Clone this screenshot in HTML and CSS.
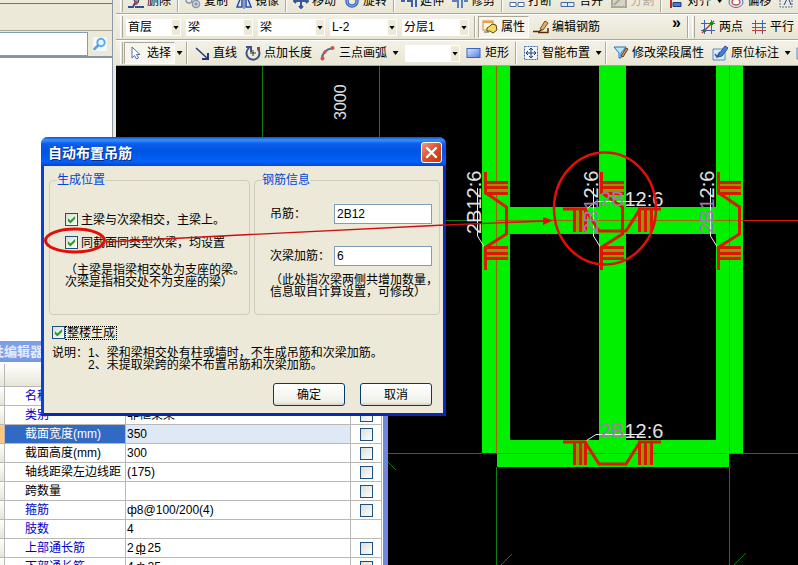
FILE: index.html
```html
<!DOCTYPE html>
<html lang="zh-CN">
<head>
<meta charset="utf-8">
<title>自动布置吊筋</title>
<link rel="stylesheet" href="styles.css">
</head>
<body>
<div class="app">
  <aside class="side">
    <div class="side-top"></div>
    <div class="side-bar"></div>
    <form class="search">
      <input type="text" class="search-box" aria-label="搜索">
      <button type="button" class="search-btn" aria-label="查找">
        <svg width="14" height="14" viewBox="0 0 14 14"><rect width="14" height="14" fill="#f2f8fc"/><circle cx="8" cy="5.500" r="3.700" fill="#eaf6ff" stroke="#62a9e8" stroke-width="2"/><path d="M5 8.500L1.500 12" stroke="#5a9fe0" stroke-width="2.500" stroke-linecap="round"/></svg>
      </button>
    </form>
  </aside>

  <main class="work">
    <div class="bars">
      <div class="bar">
        <i class="grip"></i>
        <button class="tool"><svg class="ic" viewBox="0 0 16 16"><path d="M10 0L6 8l4 2 3-10z" fill="#8a9ac8" stroke="#334" /><circle cx="8" cy="10" r="2" fill="#d04040"/><path d="M0 14h5l2-4M7 14h9" stroke="#345090" stroke-width="2" fill="none"/></svg>删除</button>
        <i class="sep"></i>
        <button class="tool"><svg class="ic" viewBox="0 0 16 16"><g fill="none" stroke="#8794b0" stroke-width="1.500"><circle cx="4" cy="7" r="3"/><circle cx="11" cy="11" r="3.500"/><circle cx="11" cy="11" r="1"/></g></svg>复制</button>
        <button class="tool"><svg class="ic" viewBox="0 0 16 16"><path d="M6 1v13H1zM10 1v13h5z" fill="#dfe8ff" stroke="#2c4ea0" stroke-width="1.500"/><path d="M8 0v16" stroke="#2c4ea0"/></svg>镜像</button>
        <i class="sep"></i>
        <button class="tool"><svg class="ic" viewBox="0 0 16 16"><path d="M8 1v14M1 8h14M6 13l2 2 2-2M3 6L1 8l2 2M13 6l2 2-2 2M6 3l2-2 2 2" fill="none" stroke="#3a569a" stroke-width="2"/></svg>移动</button>
        <button class="tool"><svg class="ic" viewBox="0 0 16 16"><circle cx="8" cy="8" r="5" fill="none" stroke="#3a62c0" stroke-width="3.500"/><circle cx="8" cy="8" r="5" fill="none" stroke="#9cbcf0"/></svg>旋转</button>
        <i class="sep"></i>
        <button class="tool"><svg class="ic" viewBox="0 0 16 16"><path d="M0 8h4M6 8h4M11 1v13M15 1v13" stroke="#3a62a8" stroke-width="2"/></svg>延伸</button>
        <button class="tool"><svg class="ic" viewBox="0 0 16 16"><path d="M6 1v14M10 1v14M0 8h5M12 8h4" stroke="#5a80b8" stroke-width="2"/></svg>修剪</button>
        <i class="sep"></i>
        <button class="tool"><svg class="ic" viewBox="0 0 16 16"><path d="M1 9.500h6v4H1zM9 9.500h6v4H9z" fill="#fff" stroke="#4a68a0"/></svg>打断</button>
        <button class="tool"><svg class="ic" viewBox="0 0 16 16"><path d="M1 9.500h13v4H1zM7.500 9v4" fill="#dde8ff" stroke="#4a68a0"/></svg>合并</button>
        <button class="tool" disabled><svg class="ic" viewBox="0 0 16 16"><path d="M1 5h14v9H1zM3 12l8-8" fill="#d8d4c4" stroke="#aaa89a" stroke-width="2"/></svg>分割</button>
        <i class="sep"></i>
        <button class="tool"><svg class="ic" viewBox="0 0 16 16"><path d="M3 0v15" stroke="#c02020" stroke-width="2"/><path d="M5 9.500h8v4H5zM5 3.500h5v3H5z" fill="#4a78d8" stroke="#203c80"/></svg>对齐</button>
        <button class="drop" aria-label="对齐选项"></button>
        <button class="tool"><svg class="ic" viewBox="0 0 16 16"><ellipse cx="8" cy="9" rx="7" ry="5.500" fill="#e8eef8" stroke="#5070a8"/><ellipse cx="8" cy="9" rx="4" ry="3" fill="#fff" stroke="#d05050" stroke-width="1.500"/></svg>偏移</button>
        <button class="tool"><svg class="ic" viewBox="0 0 16 16"><path d="M1 1h12v13H1z" fill="none" stroke="#5070b0" stroke-dasharray="2 1"/><path d="M5 12l4-8 3 8" fill="none" stroke="#204080"/></svg>拉伸</button>
      </div>

      <div class="bar">
        <i class="grip"></i>
        <span class="combos">
          <span class="combo combo-s"><select aria-label="楼层"><option>首层</option></select></span>
          <span class="combo"><select aria-label="构件类别"><option>梁</option></select></span>
          <span class="combo"><select aria-label="构件类型"><option>梁</option></select></span>
          <span class="combo"><select aria-label="构件名称"><option>L-2</option></select></span>
          <span class="combo"><select aria-label="分层"><option>分层1</option></select></span>
        </span>
        <i class="sep"></i>
        <button class="tool pressed"><svg class="ic" viewBox="0 0 16 16"><rect x="1" y="2" width="10" height="9" fill="#fffbe8" stroke="#c88a30"/><path d="M1 2h10v2H1z" fill="#f0a040"/><path d="M5 9l3-2 2-2 4 1 1 5-4 3-3-2H5z" fill="#f2dc60" stroke="#5a4a10"/><path d="M2 13h5" stroke="#555"/></svg>属性</button>
        <button class="tool"><svg class="ic" viewBox="0 0 16 16"><path d="M0 12.500h6l3-2M5 13.500h10V9" fill="none" stroke="#5a2a10" stroke-width="1.500"/><path d="M7 10l5-8 3 2-5 7z" fill="#e8b060" stroke="#705020"/></svg>编辑钢筋</button>
        <button class="more" aria-label="更多">»</button>
        <i class="sep"></i>
        <i class="grip"></i>
        <button class="tool"><svg class="ic" viewBox="0 0 16 16"><path d="M1 4.500h14M1 11.500h14M4.500 1v14M11.500 1v14" stroke="#4060b0"/><path d="M2 14L14 2" stroke="#c03030" stroke-width="1.500"/><path d="M3 10h3v3H3zM10 3h3v3h-3z" fill="#208030"/></svg>两点</button>
        <button class="tool"><svg class="ic" viewBox="0 0 16 16"><path d="M4.500 1v14M11.500 1v14" stroke="#4060b0"/><path d="M1 4.500h14" stroke="#4060b0"/><path d="M1 8.500h14M1 11.500h14" stroke="#c04040"/></svg>平行</button>
      </div>

      <div class="bar">
        <i class="grip"></i>
        <button class="tool pressed"><svg class="ic" viewBox="0 0 16 16"><path d="M4 2v11l2.500-2.500L8.500 14l2-1-2-3.500H12z" fill="#fff" stroke="#4a70b0"/></svg>选择</button>
        <button class="drop" aria-label="选择选项"></button>
        <i class="sep"></i>
        <button class="tool"><svg class="ic" viewBox="0 0 16 16"><path d="M2 3l11 10" stroke="#203c78" stroke-width="1.500"/><path d="M14 8v6H8" fill="none" stroke="#203c78" stroke-width="2"/></svg>直线</button>
        <button class="tool"><svg class="ic" viewBox="0 0 16 16"><path d="M4 3a6.500 6.500 0 1 0 9 1" fill="none" stroke="#3c5488" stroke-width="2"/><path d="M1 2h5v5" fill="none" stroke="#3c5488" stroke-width="2"/><path d="M8 5v6M5 8h6" stroke="#333"/><path d="M12 2h3v3h-3z" fill="#b04040"/></svg>点加长度</button>
        <button class="tool"><svg class="ic" viewBox="0 0 16 16"><path d="M2 14Q2 5 13 3" fill="none" stroke="#4a70a8" stroke-width="2"/><g fill="#d85040"><circle cx="2.500" cy="13.500" r="2"/><circle cx="5" cy="7" r="1.700"/><circle cx="12.500" cy="3" r="2"/></g></svg>三点画弧</button>
        <button class="drop" aria-label="画弧选项"></button>
        <span class="combo combo-s"><select aria-label="半径"><option></option></select></span>
        <button class="tool"><svg class="ic" viewBox="0 0 16 16"><defs><linearGradient id="box" x2="1" y2="1"><stop stop-color="#dce8ff"/><stop offset="1" stop-color="#4c80e0"/></linearGradient></defs><rect x="1" y="3.500" width="13" height="9" fill="url(#box)" stroke="#3a66c0"/></svg>矩形</button>
        <i class="sep"></i>
        <button class="tool"><svg class="ic" viewBox="0 0 16 16"><rect x="1.500" y="1.500" width="13" height="13" fill="#f0f6ff" stroke="#3c64b0" stroke-dasharray="2 1"/><path d="M8 3v10M3 8h10M6 5l2-2 2 2M6 11l2 2 2-2M5 6L3 8l2 2M11 6l2 2-2 2" fill="none" stroke="#223c70"/></svg>智能布置</button>
        <button class="drop" aria-label="布置选项"></button>
        <i class="sep"></i>
        <button class="tool"><svg class="ic" viewBox="0 0 16 16"><path d="M1 2h12L8 8v5H6V8z" fill="#b8e4ff" stroke="#2870c0"/><path d="M8 11l5-8 2 1-5 8z" fill="#d89050" stroke="#604020"/></svg>修改梁段属性</button>
        <button class="tool"><svg class="ic" viewBox="0 0 16 16"><path d="M1 4h12v11H1z" fill="#dceaff" stroke="#5a88c8"/><path d="M3 9l2 3 3-5" fill="none" stroke="#3060a0" stroke-width="1.500"/><path d="M7 9l6-8 3 2-6 8-4 1z" fill="#4a80d8" stroke="#2a4c90"/></svg>原位标注</button>
        <button class="drop" aria-label="标注选项"></button>
        <button class="tool" aria-label="重提梁跨"><svg class="ic" viewBox="0 0 16 16"><path d="M1 3h12v11H1z" fill="#dceaff" stroke="#5a88c8"/></svg></button>
      </div>
    </div>

    <div class="canvas">
      <svg width="682" height="499" viewBox="116 66 682 499" font-family="Liberation Sans, sans-serif">
        <defs>
          <g id="hanger" fill="none" stroke="#dc1800" stroke-width="3">
            <path d="M574 212h12v20h-12zM640 212h12v20h-12z" fill="#8c9a00" stroke="none"/>
            <path d="M563 209h24M574.500 209v23M580.500 209v23M585.500 209v23"/>
            <path d="M585 209l14 22h27l14-22"/>
            <path d="M638 209h23M639.500 209v23M645.500 209v23M651.500 209v23"/>
          </g>
          <g id="hangerV" fill="none" stroke="#dc1800" stroke-width="3">
            <path d="M487 182h21v11h-21zM487 247h21v11h-21z" fill="#8c9a00" stroke="none"/>
            <path d="M485.500 172v22M485 182.500h23M485 187.500h23M485 193.500h23"/>
            <path d="M486 193l20.500 14v27L486 247"/>
            <path d="M485.500 246v24M485 247.500h23M485 253.500h23M485 258.500h23"/>
          </g>
        </defs>
        <g stroke="#0c7c14">
          <path d="M262.500 66v100M379.500 66v100M440 220.500h42M388 453.500h94M496.500 467v98M729.500 467v98"/>
          <path d="M388 462l8 8M501 565l11-11M734 565l12-12"/>
        </g>
        <path d="M482 66h28v141h89V66h27v141h90V66h27v387h-14v14H497v-14h-15zM510 234v206h89V234zM626 234v206h90V234z" fill="#00f000" fill-rule="evenodd"/>
        <g stroke="#a86008">
          <path d="M496.500 66v387M729.500 66v387M496 220.500h247M496 453.500h247"/>
        </g>
        <path d="M743 220.500h55M743 453.500h55" stroke="#d81414"/>
        <g stroke="#f0f0f0" fill="none">
          <path d="M477.500 188v48l8 13M593.500 188v48l8 13M710.500 188v48l8 13"/>
          <path d="M645 201.500h-49l-9 7M645 434.500h-49l-11 7"/>
        </g>
        <use href="#hangerV"/>
        <use href="#hangerV" x="116"/>
        <use href="#hangerV" x="233"/>
        <use href="#hanger"/>
        <use href="#hanger" y="233"/>
        <g font-size="20" fill="#e0e0e0">
          <text transform="translate(481 234) rotate(-90)">2B12:6</text>
          <text transform="translate(598 234) rotate(-90)"><tspan class="over">2B1</tspan>2:6</text>
          <text transform="translate(714 234) rotate(-90)"><tspan class="over">2B1</tspan>2:6</text>
          <text x="600" y="206"><tspan class="over">2B</tspan>12:6</text>
          <text x="600" y="438"><tspan class="over">2B</tspan>12:6</text>
          <text font-size="16" transform="translate(346 120) rotate(-90)">3000</text>
        </g>
      </svg>
    </div>
  </main>

  <section class="panel">
    <h2 class="panel-title">属性编辑器</h2>
    <table class="props">
      <colgroup><col class="c-mark"><col class="c-name"><col class="c-value"><col class="c-check"></colgroup>
      <thead><tr><th></th><th></th><th></th><th></th></tr></thead>
      <tbody>
        <tr><th></th><td class="key">名称</td><td>L-2</td><td></td></tr>
        <tr><th></th><td class="key">类别</td><td>非框架梁</td><td><input type="checkbox" aria-label="类别"></td></tr>
        <tr class="selected"><th></th><td>截面宽度(mm)</td><td>350</td><td><input type="checkbox" aria-label="截面宽度"></td></tr>
        <tr><th></th><td>截面高度(mm)</td><td>300</td><td><input type="checkbox" aria-label="截面高度"></td></tr>
        <tr><th></th><td>轴线距梁左边线距</td><td>(175)</td><td><input type="checkbox" aria-label="轴线距梁左边线距"></td></tr>
        <tr><th></th><td>跨数量</td><td></td><td><input type="checkbox" aria-label="跨数量"></td></tr>
        <tr><th></th><td class="key">箍筋</td><td>ф8@100/200(4)</td><td><input type="checkbox" aria-label="箍筋"></td></tr>
        <tr><th></th><td class="key">肢数</td><td>4</td><td></td></tr>
        <tr><th></th><td class="key">上部通长筋</td><td>2<u>ф</u>25</td><td><input type="checkbox" aria-label="上部通长筋"></td></tr>
        <tr><th></th><td class="key">下部通长筋</td><td>4<u>ф</u>25</td><td><input type="checkbox" aria-label="下部通长筋"></td></tr>
      </tbody>
    </table>
  </section>

  <section class="dialog" role="dialog" aria-labelledby="dlg-title">
    <header class="dialog-head">
      <h1 id="dlg-title">自动布置吊筋</h1>
      <button class="close" aria-label="关闭"><svg width="13" height="13" viewBox="0 0 13 13"><path d="M2 2l9 9M11 2l-9 9" stroke="#fff" stroke-width="2.400" stroke-linecap="round"/></svg></button>
    </header>
    <form class="dialog-body">
      <div class="groups">
        <fieldset>
          <legend>生成位置</legend>
          <div class="checks">
            <label><input type="checkbox" checked>主梁与次梁相交，主梁上。</label>
            <label><input type="checkbox" checked>同截面同类型次梁，均设置</label>
          </div>
          <p>（主梁是指梁相交处为支座的梁。<br>次梁是指相交处不为支座的梁）</p>
        </fieldset>
        <fieldset>
          <legend>钢筋信息</legend>
          <div class="fields">
            <label for="hang">吊筋：</label><input type="text" id="hang" value="2B12">
            <label for="extra">次梁加筋：</label><input type="text" id="extra" value="6">
          </div>
          <p>（此处指次梁两侧共增加数量，<br>信息取自计算设置，可修改）</p>
        </fieldset>
      </div>
      <label class="whole"><input type="checkbox" checked><span>整楼生成</span></label>
      <div class="notes">
        <span>说明：</span>
        <div>1、梁和梁相交处有柱或墙时，不生成吊筋和次梁加筋。<br>2、未提取梁跨的梁不布置吊筋和次梁加筋。</div>
      </div>
      <div class="actions">
        <button type="button">确定</button>
        <button type="button">取消</button>
      </div>
    </form>
  </section>

  <svg class="marks" width="798" height="565" viewBox="0 0 798 565" fill="none" stroke="#e01008">
    <ellipse cx="75" cy="240.500" rx="29.500" ry="11.500" stroke-width="3"/>
    <ellipse cx="605" cy="208.500" rx="51" ry="56" stroke-width="2.500"/>
    <path d="M106 242L250 234.500L445 225L545 221" stroke="#cc1010" stroke-width="1.300"/>
    <path d="M543 217l10 3.500-10 4.500z" fill="#e01008" stroke="none"/>
  </svg>
</div>
</body>
</html>
```
FILE: styles.css
```css
* { box-sizing: border-box; }

body {
  margin: 0;
  font: 12px/12px "Liberation Sans", "Noto Sans CJK SC", sans-serif;
  color: #000;
}

button, input, select { font: inherit; color: inherit; }

.app {
  position: relative;
  display: grid;
  grid-template-columns: 116px 1fr;
  height: 100vh;
  overflow: hidden;
  background: #ece9d8;
}

/* left column */
.side {
  display: flex;
  flex-direction: column;
  margin-right: 3px;
  border-right: 1px solid #8a98a8;
  background: #fff;
}
.side-top { height: 4px; background: #ece9d8; border-bottom: 1px solid #77756a; }
.side-bar { height: 27px; background: #ece9d8; border-bottom: 1px solid #aca899; }
.search {
  display: flex;
  align-items: center;
  height: 27px;
  background: #ece9d8;
  border-bottom: 2px solid #8296a8;
}
.search-box {
  flex: 1;
  min-width: 0;
  height: 24px;
  border: 1px solid #7f9db9;
  border-left: 0;
  background: #fff;
}
.search-btn {
  display: flex;
  padding: 0 5px;
  border: 0;
  background: none;
}

/* toolbars */
.work { display: flex; flex-direction: column; min-width: 0; overflow: hidden; }
.bars { margin-top: -12px; }
.bar {
  display: flex;
  align-items: center;
  height: 26px;
  padding-left: 3px;
  border-bottom: 1px solid #aca899;
  border-top: 1px solid #fff;
  background: linear-gradient(#f3f1e6, #e8e5d3);
  white-space: nowrap;
  overflow: hidden;
}
.grip {
  flex: none;
  width: 3px;
  height: 22px;
  margin: 0 1px;
  border-left: 1px solid #fff;
  border-right: 1px solid #aca899;
}
.sep {
  flex: none;
  width: 2px;
  height: 22px;
  margin: 0 2px;
  border-left: 1px solid #aca899;
  border-right: 1px solid #fff;
}
.tool {
  display: flex;
  flex: none;
  align-items: center;
  gap: 3px;
  height: 22px;
  padding: 0 4px;
  border: 0;
  background: none;
}
.tool:disabled { color: #aca899; }
.pressed {
  border: 1px solid #aca899;
  border-right-color: #fff;
  border-bottom-color: #fff;
  background: #f7f5ee;
  padding: 0 3px;
}
.ic { width: 16px; height: 16px; }
.drop {
  display: grid;
  place-items: center;
  flex: none;
  width: 9px;
  height: 22px;
  padding: 0;
  border: 0;
  background: none;
}
.drop::after, .combo::after {
  content: "";
  width: 6px;
  height: 4px;
  background: #000;
  clip-path: polygon(0 0, 100% 0, 50% 100%);
}
.combos { display: flex; gap: 5px; margin: 0 3px 0 2px; }
.combo { position: relative; flex: none; width: 67px; height: 17px; }
.combo-s { width: 55px; }
.drop + .combo { margin: 0 2px 0 5px; }
.combo select {
  width: 100%;
  height: 100%;
  padding: 0 0 0 2px;
  border: 0;
  border-radius: 0;
  appearance: none;
  background: linear-gradient(#ece9d8, #ece9d8) right 1px center / 8px 15px no-repeat #fff;
}
.combo::after { position: absolute; right: 2px; top: 7px; }
.more { margin-left: auto; padding: 0 4px 8px; border: 0; background: none; font-size: 16px; font-weight: bold; }

.canvas { flex: 1; overflow: hidden; background: #000; }
.canvas svg { display: block; }
.over { fill: #a878a8; }

/* check boxes */
input[type="checkbox"] {
  display: grid;
  place-items: center;
  flex: none;
  width: 13px;
  height: 13px;
  margin: 0;
  border: 1px solid #1c5180;
  appearance: none;
  background: linear-gradient(135deg, #dcdcd7, #fff);
}
input[type="checkbox"]:checked::after {
  content: "";
  width: 9px;
  height: 9px;
  background: #21a121;
  clip-path: polygon(10% 35%, 38% 62%, 90% 10%, 90% 42%, 38% 95%, 10% 68%);
}

/* property panel */
.panel {
  position: absolute;
  left: 0;
  top: 341px;
  width: 388px;
  border-right: 5px solid #7288dc;
  background: #fff;
}
.panel-title {
  height: 21px;
  margin: 0 0 2px;
  padding-right: 340px;
  overflow: hidden;
  direction: rtl;
  background: linear-gradient(#7c9ce6, #82a4ee 60%, #7796e0);
  color: #e4ecfc;
  font-size: 13px;
  line-height: 21px;
  white-space: nowrap;
}
.props {
  width: 382px;
  table-layout: fixed;
  border-collapse: separate;
  border-spacing: 0;
}
.c-mark { width: 5px; }
.c-name { width: 121px; }
.c-value { width: 225px; }
.c-check { width: 31px; }
.props th, .props td {
  height: 19px;
  padding: 0 0 0 1px;
  border-right: 1px solid #b8b8b8;
  border-bottom: 1px solid #b8b8b8;
  white-space: nowrap;
}
.props th { background: linear-gradient(#fff, #e8e5d6); padding: 0; }
.props thead th { height: 23px; }
.props td:nth-child(2) { padding-left: 20px; }
.props td:nth-child(4) { padding-left: 9px; }
.props u { padding: 0 2px; }
.key { color: #0000c8; }
.selected th { background: #ffc87c; }
.selected td:nth-child(2) { background: #316ac5; color: #fff; }
.selected td:nth-child(3) { background: #dfe8f5; }

/* dialog */
.dialog {
  position: absolute;
  left: 41px;
  top: 137px;
  width: 405px;
  border: 3px solid #0a3fd8;
  border-top: 0;
  border-right-color: #0828b8;
  border-bottom-color: #0828b8;
  border-radius: 7px 7px 0 0;
  background: #ece9d8;
}
.dialog-head {
  display: flex;
  align-items: center;
  justify-content: space-between;
  height: 29px;
  margin: 0 -3px;
  padding: 2px 4px 0 7px;
  border-radius: 7px 7px 0 0;
  background: linear-gradient(#0a50d8, #3a90ff 10%, #0a5cea 24%, #0054e3 50%, #0062fa 85%, #0046d0);
}
.dialog-head h1 {
  margin: 0;
  color: #fff;
  font-size: 14px;
  line-height: 20px;
  text-shadow: 1px 1px #0a2c80;
}
.close {
  display: grid;
  place-items: center;
  width: 21px;
  height: 21px;
  padding: 0;
  border: 1px solid #fff;
  border-radius: 3px;
  background: linear-gradient(135deg, #ee9a80, #dc4e28 50%, #c03810);
}
.dialog-body { padding: 8px 3px 7px 5px; }
.groups { display: grid; grid-template-columns: 201fr 186fr; gap: 4px; }
fieldset {
  min-width: 0;
  margin: 0;
  padding: 0 7px 16px 15px;
  border: 1px solid #cfcdbb;
  border-radius: 4px;
  white-space: nowrap;
}
legend { margin-left: -8px; padding: 0; color: #0046d5; }
.checks { padding-top: 22px; }
.checks label, .whole { display: flex; align-items: center; gap: 3px; }
.checks label { height: 23px; }
fieldset p { margin: 10px 0 0; }
.fields {
  display: grid;
  grid-template-columns: 1fr 98px;
  align-items: center;
  row-gap: 22px;
  padding-top: 18px;
}
.fields + p { margin-top: 8px; }
.fields input {
  width: 98px;
  height: 20px;
  padding: 0 2px;
  border: 1px solid #7f9db9;
  background: #fff;
}
.whole { height: 13px; margin: 11px 0 0 3px; gap: 1px; }
.whole span { padding: 0 1px; outline: 1px dotted #000; }
.notes { display: flex; margin: 8px 0 12px 3px; white-space: nowrap; }
.actions { display: flex; justify-content: flex-end; gap: 15px; padding-right: 8px; }
.actions button {
  width: 72px;
  height: 23px;
  padding: 0;
  border: 1px solid #003c74;
  border-radius: 3px;
  background: linear-gradient(#fff, #f0f0ea 85%, #d8d2c4);
}

.marks { position: absolute; left: 0; top: 0; pointer-events: none; }
```
